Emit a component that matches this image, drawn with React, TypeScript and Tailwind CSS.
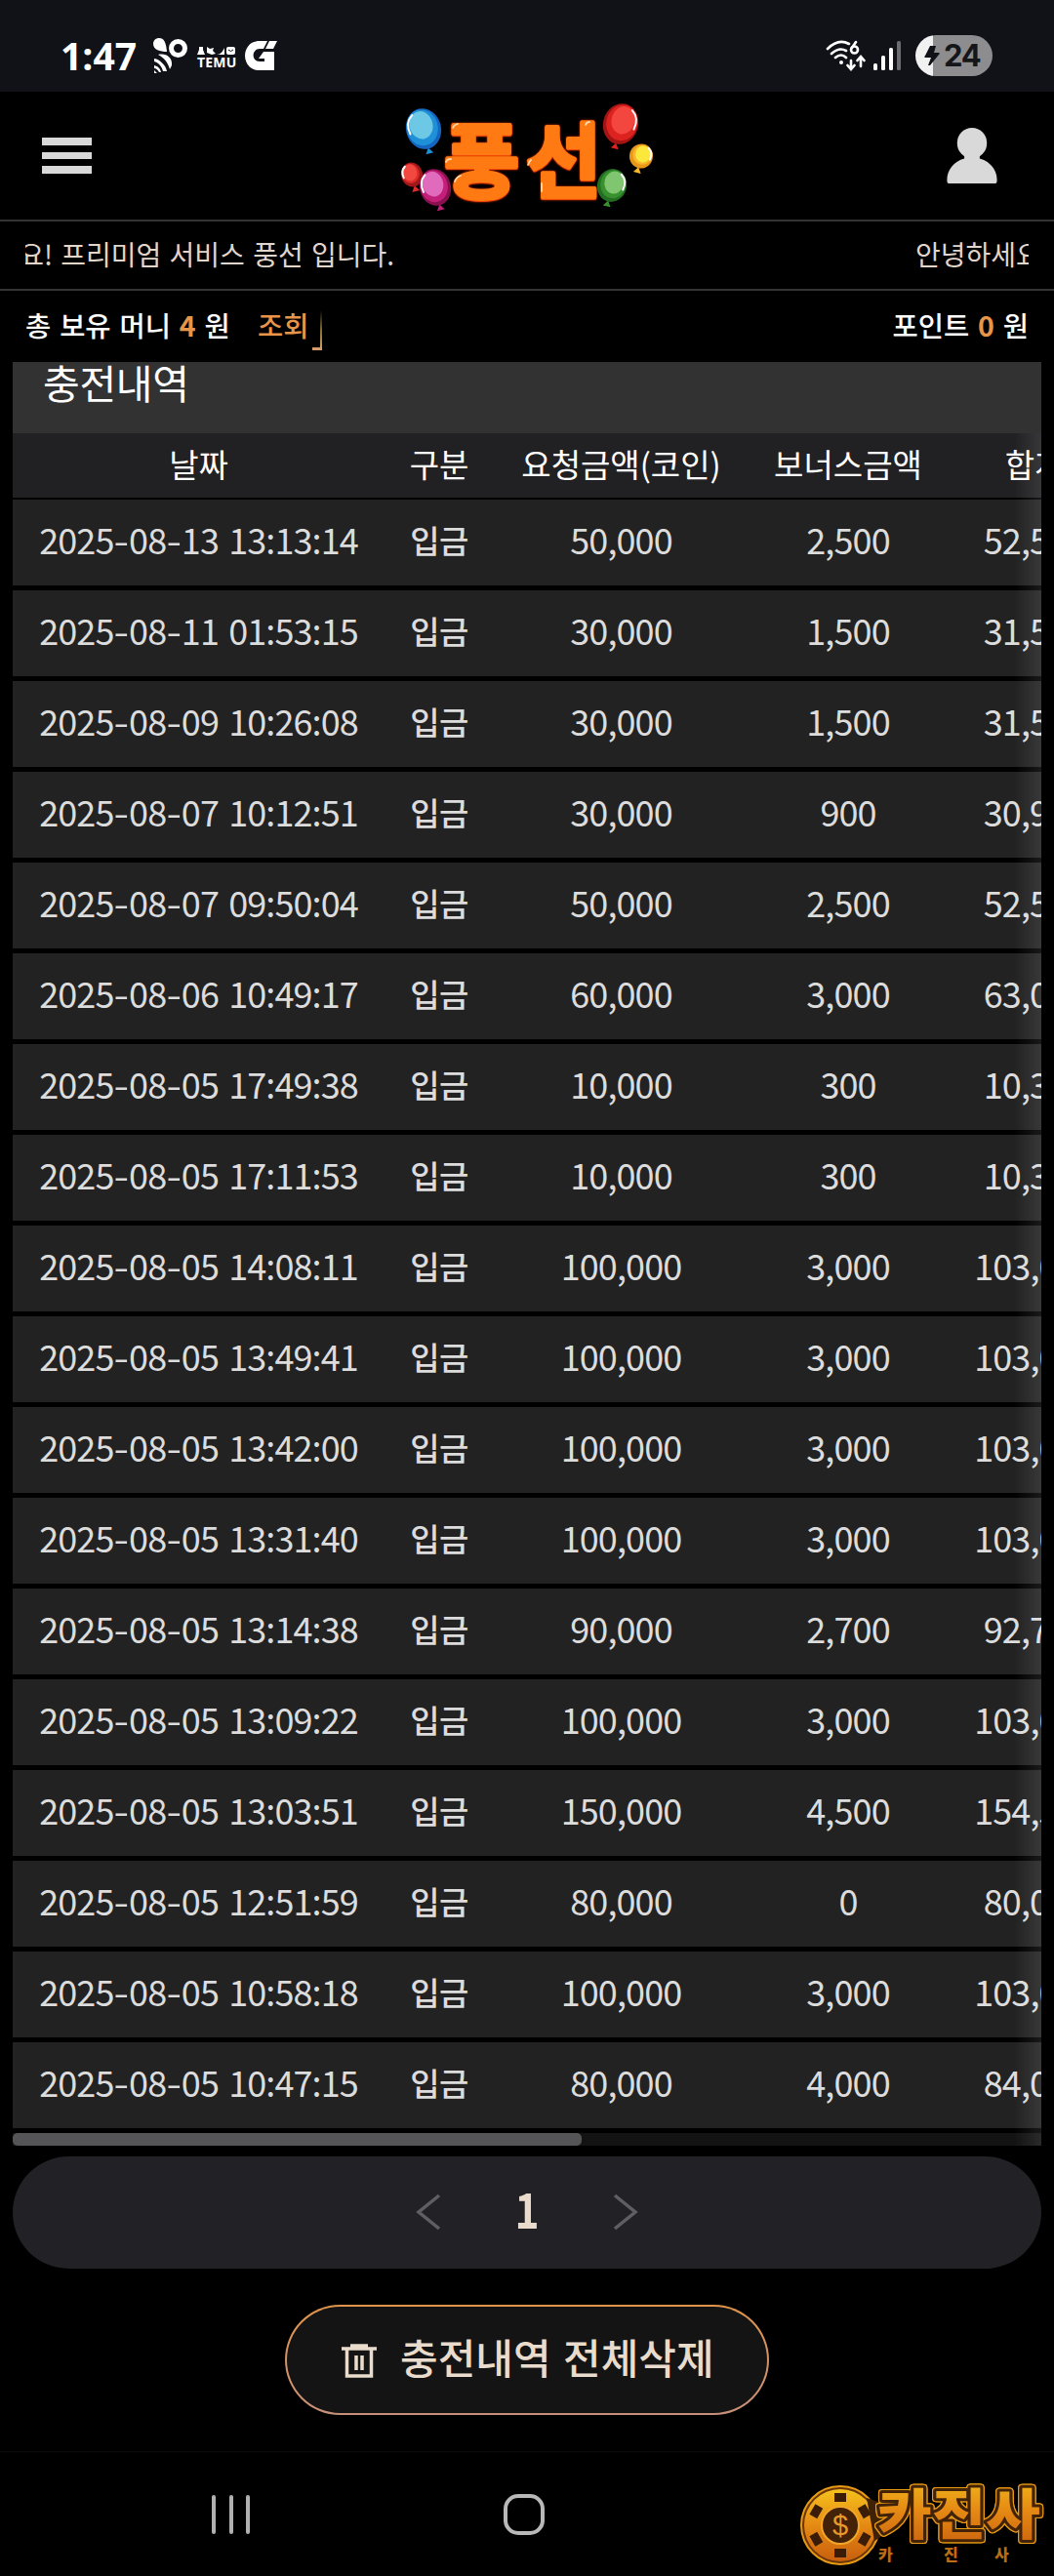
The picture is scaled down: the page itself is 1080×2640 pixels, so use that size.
import type { ReactNode } from "react";

const history = [
  ["2025-08-13 13:13:14", "50,000", "2,500", "52,500"],
  ["2025-08-11 01:53:15", "30,000", "1,500", "31,500"],
  ["2025-08-09 10:26:08", "30,000", "1,500", "31,500"],
  ["2025-08-07 10:12:51", "30,000", "900", "30,900"],
  ["2025-08-07 09:50:04", "50,000", "2,500", "52,500"],
  ["2025-08-06 10:49:17", "60,000", "3,000", "63,000"],
  ["2025-08-05 17:49:38", "10,000", "300", "10,300"],
  ["2025-08-05 17:11:53", "10,000", "300", "10,300"],
  ["2025-08-05 14:08:11", "100,000", "3,000", "103,000"],
  ["2025-08-05 13:49:41", "100,000", "3,000", "103,000"],
  ["2025-08-05 13:42:00", "100,000", "3,000", "103,000"],
  ["2025-08-05 13:31:40", "100,000", "3,000", "103,000"],
  ["2025-08-05 13:14:38", "90,000", "2,700", "92,700"],
  ["2025-08-05 13:09:22", "100,000", "3,000", "103,000"],
  ["2025-08-05 13:03:51", "150,000", "4,500", "154,500"],
  ["2025-08-05 12:51:59", "80,000", "0", "80,000"],
  ["2025-08-05 10:58:18", "100,000", "3,000", "103,000"],
  ["2025-08-05 10:47:15", "80,000", "4,000", "84,000"],
];

function StatusBar() {
  return (
    <div className="flex h-[94px] items-center bg-[#111218] pt-[20px] pr-[63px] pl-[62px]">
      <span className="w-[94px] font-['Open_Sans'] text-[39px] leading-[74px] font-bold text-white">1:47</span>
      <svg className="h-[38px] w-[36px]" viewBox="0 0 36 38">
        <path fill="#fff" d="M1 7C1 3 4 1 7 1c5 0 7 4 8 14C8 15 1 13 1 7Z" />
        <circle cx="26.500" cy="11.500" r="7" fill="none" stroke="#fff" strokeWidth="5" />
        <path fill="#fff" d="M6 18c8-2 15 3 14 11l-2 4C16 26 12 21 6 18zM2 22c6 1 12 7 13 13h-4C10 30 6 26 2 25zM2 29c4 1 6 3 7 7H7c-1-2-3-4-5-4zM2 34l3 3H2z" />
      </svg>
      <div className="ml-[10px] w-[42px] pt-[4px]">
        <svg className="h-[8px] w-[39px]" viewBox="0 0 39 8" fill="#fff">
          <path d="M2 0h4v3l2 5H0l2-5zM10 0l3 2 4-1-1 3 3 3-4 1-5-2zM20 8c4 0 6-3 8-7v7z" />
          <rect x="30" y="0" width="9" height="8" rx="2" />
          <path d="M32 3q2.500 3 5 0" stroke="#111218" fill="none" />
        </svg>
        <div className="font-['Open_Sans'] text-[14px] leading-[15px] font-bold tracking-[0.200px] text-white">TEMU</div>
      </div>
      <svg className="ml-[7px] h-[30px] w-[33px]" viewBox="0 0 33 30">
        <path fill="#fff" d="M15 0h8l-4 8h-4c-8 0-9 13 0 13h5v-3h-6l5-7h11v19H15C-5 30-5 0 15 0ZM25 0h8l-4 8h-8z" />
      </svg>
      <div className="ml-auto flex items-center">
        <svg className="h-[32px] w-[41px]" viewBox="0 0 41 32" fill="none" stroke="#fff" strokeWidth="2.600" strokeLinecap="round">
          <path d="M2 9Q13-2 24 4M6 14q8-7 15-3M10 18q6-5 11 0" />
          <circle cx="16" cy="23" r="2" fill="#fff" stroke="none" />
          <circle cx="29.500" cy="10" r="3.500" />
          <path d="M27 8l4-6M26 21v8M22.500 26l3.500 4 3.500-4M36 27v-9M32.500 21l3.500-4 3.500 4" />
        </svg>
        <svg className="ml-[8px] h-[30px] w-[29px]" viewBox="0 0 29 30">
          <rect x="0" y="23" width="4" height="7" rx="1.500" fill="#fff" />
          <rect x="8" y="15" width="4" height="15" rx="1.500" fill="#fff" />
          <rect x="16" y="7" width="4" height="23" rx="1.500" fill="#fff" />
          <rect x="24" y="0" width="4" height="30" rx="1.500" fill="#6b6c70" />
        </svg>
        <div className="ml-[14px] flex h-[42px] w-[79px] items-center overflow-hidden rounded-full bg-linear-to-r from-[#f1f1f2] from-[23%] to-[#8d8d90] to-[23%] pl-[9px]">
          <svg className="h-[22px] w-[16px]" viewBox="0 0 16 22">
            <path fill="#111218" d="M6 1h6L10 8h5c1 0 1 1 0 2L6 21H4l3-8H1c-1 0-1-1 0-2z" />
          </svg>
          <span className="ml-[4px] font-['Inter'] text-[31px] leading-[42px] font-bold tracking-[-1.200px] text-[#15161a]">24</span>
        </div>
      </div>
    </div>
  );
}

type BalloonProps = { x: number; y: number; rx: number; ry: number; dark: string; mid: string; light: string; tilt: number; shine: number };

function Balloon({ x, y, rx, ry, dark, mid, light, tilt, shine }: BalloonProps) {
  return (
    <g transform={`translate(${x} ${y}) rotate(${tilt})`}>
      <path d={`M0 ${ry - 1}l-4 6h8z`} fill={mid} />
      <ellipse rx={rx} ry={ry} fill={dark} />
      <ellipse cx={shine} cy={-1.5} rx={rx - 2} ry={ry - 2.5} fill={mid} />
      <ellipse cx={shine * 1.5} cy={-ry * 0.2} rx={rx * 0.66} ry={ry * 0.68} fill={light} />
      <path
        d={`M${shine * rx * 0.45} ${-ry * 0.78}Q${shine * rx * 0.95} ${-ry * 0.5} ${shine * rx * 0.8} ${ry * 0.1}`}
        fill="none"
        stroke="#fff"
        strokeWidth="2"
        strokeLinecap="round"
      />
    </g>
  );
}

function Logo() {
  return (
    <svg className="ml-[14px] h-[126px] w-[300px]" viewBox="0 6 300 126">
      <Balloon x={44} y={41} rx={18} ry={21} tilt={-14} shine={-1} dark="#1565c0" mid="#1e90d8" light="#6cc8e4" />
      <Balloon x={32} y={88} rx={11} ry={12.5} tilt={-14} shine={-1} dark="#a01818" mid="#dc2b2b" light="#f2483f" />
      <Balloon x={246} y={36} rx={18} ry={21} tilt={14} shine={1} dark="#a31414" mid="#dc231f" light="#f2463e" />
      <Balloon x={267} y={69} rx={12} ry={12.5} tilt={14} shine={1} dark="#e8971b" mid="#f8b82a" light="#fce83c" />
      <Balloon x={237} y={99} rx={15} ry={17} tilt={14} shine={1} dark="#236e20" mid="#37912e" light="#80c670" />
      <g
        className="font-['Noto_Sans_CJK_KR','Noto_Sans_CJK_SC',sans-serif] text-[84px] font-bold [filter:drop-shadow(0_1px_0_#f24a06)_drop-shadow(0_0_1px_#d92b00)]"
        fill="#ff7a12"
        stroke="#ff7a12"
        strokeWidth="4"
        strokeLinejoin="round"
      >
        <text x="65" y="105">풍</text>
        <text x="149" y="105">선</text>
      </g>
      <g fill="none" stroke="#ffd9a8" strokeWidth="1.800" strokeLinecap="round">
        <path d="M74 40q1-3 5-4M67 75q1-3 5-3M76 95q2-5 6-6M151 78q1-3 3-5M210 37q1-3 4-3M165 97v8" />
      </g>
      <Balloon x={56} y={101} rx={16} ry={19} tilt={-14} shine={-1} dark="#8a1050" mid="#c21f78" light="#e06abb" />
    </svg>
  );
}

function Header() {
  return (
    <header className="flex h-[133px] items-center justify-between border-b-2 border-[#333] pr-[57px] pl-[43px]">
      <div className="flex w-[53px] flex-col gap-[7px]">
        <div className="h-[7.700px] w-[51px] bg-[#d9d9d9]" />
        <div className="h-[7.700px] w-[51px] bg-[#d9d9d9]" />
        <div className="h-[7.700px] w-[51px] bg-[#d9d9d9]" />
      </div>
      <Logo />
      <svg className="h-[57px] w-[54px]" viewBox="0 0 54 58" fill="#d9d9d9">
        <ellipse cx="27" cy="16" rx="15.500" ry="16" />
        <path d="M19 28h16v4c11 3 18 12 18 22 0 3 0 4-2 4H3c-2 0-2-1-2-4 0-10 7-19 18-22z" />
      </svg>
    </header>
  );
}

function Cell({ children }: { children: ReactNode }) {
  return <div className="text-center whitespace-nowrap">{children}</div>;
}

function DateText({ value }: { value: string }) {
  const [year, month, rest] = value.split("-");
  return (
    <>
      {year}
      <span className="mx-[2px] inline-block scale-x-125">-</span>
      {month}
      <span className="mx-[2px] inline-block scale-x-125">-</span>
      {rest}
    </>
  );
}

function HistoryTable() {
  return (
    <section className="relative mx-[13px] h-[1828px] overflow-hidden">
      <h2 className="h-[73px] bg-[#323232] pl-[31px] text-[41px] leading-[40px] tracking-[-0.300px] text-white">충전내역</h2>
      <div className="mb-[2px] grid h-[66px] w-[1136px] grid-cols-[381px_112px_261px_204px_178px] bg-[#212124] text-[33px] leading-[63px] text-white">
        <Cell>날짜</Cell>
        <Cell>구분</Cell>
        <Cell>요청금액(코인)</Cell>
        <Cell>보너스금액</Cell>
        <Cell>합계</Cell>
      </div>
      {history.map(([date, amount, bonus, total]) => (
        <div
          key={date}
          className="mb-[5px] grid h-[88px] w-[1136px] grid-cols-[381px_112px_261px_204px_178px] bg-[#222] text-[36px] leading-[80px] tracking-[-0.900px] [word-spacing:3px] text-[#dcdcdc]"
        >
          <Cell>
            <DateText value={date} />
          </Cell>
          <div className="text-center text-[33px] leading-[82px] font-medium tracking-[-0.500px]">입금</div>
          <Cell>{amount}</Cell>
          <Cell>{bonus}</Cell>
          <Cell>{total}</Cell>
        </div>
      ))}
      <div className="h-[13px] bg-[#131313]">
        <div className="h-full w-[583px] rounded-[5px] bg-[#555558]" />
      </div>
      <div className="absolute top-[73px] right-0 bottom-0 w-[28px] bg-linear-to-r from-transparent to-white/10" />
    </section>
  );
}

function Watermark() {
  return (
    <svg className="absolute right-0 bottom-0 h-[120px] w-[280px]" viewBox="0 0 280 120">
      <defs>
        <linearGradient id="gold" x1="0" y1="0" x2="0" y2="1">
          <stop offset="0" stopColor="#f5c21c" />
          <stop offset="0.500" stopColor="#e58a14" />
          <stop offset="1" stopColor="#c85f0e" />
        </linearGradient>
      </defs>
      <circle cx="61" cy="68" r="40" fill="#6a3508" stroke="#e79a12" strokeWidth="2" />
      <circle cx="61" cy="68" r="37" fill="url(#gold)" />
      {/* six notches round the edge of the chip */}
      <g fill="#3a1c07">
        <rect x="55" y="35" width="12" height="9" />
        <rect x="55" y="35" width="12" height="9" transform="rotate(60 61 68)" />
        <rect x="55" y="35" width="12" height="9" transform="rotate(120 61 68)" />
        <rect x="55" y="35" width="12" height="9" transform="rotate(180 61 68)" />
        <rect x="55" y="35" width="12" height="9" transform="rotate(240 61 68)" />
        <rect x="55" y="35" width="12" height="9" transform="rotate(300 61 68)" />
      </g>
      <circle cx="61" cy="68" r="19" fill="#432208" stroke="#f1a628" strokeWidth="2" />
      <text x="61" y="78" textAnchor="middle" className="font-['Liberation_Sans'] text-[29px]" fill="#e8992a">$</text>
      <path d="M88 40l24 8v26L96 84z" fill="#3f2106" />
      <g
        className="font-['Noto_Sans_CJK_KR',sans-serif] text-[56px] font-black [filter:drop-shadow(1px_0_0_#e89a12)_drop-shadow(-1px_0_0_#e89a12)_drop-shadow(0_1px_0_#e89a12)_drop-shadow(0_-1px_0_#e89a12)] [paint-order:stroke]"
        fill="url(#gold)"
        stroke="#432307"
        strokeWidth="6"
        strokeLinejoin="round"
      >
        <text x="99" y="77" textLength="167" lengthAdjust="spacingAndGlyphs">카진사</text>
      </g>
      <g className="font-['Noto_Sans_CJK_KR',sans-serif] text-[16px] font-black" fill="#bd6b14">
        <text x="100" y="104">카</text>
        <text x="167" y="104">진</text>
        <text x="219" y="104">사</text>
      </g>
    </svg>
  );
}

export default function App() {
  return (
    <div className="flex h-[2640px] w-[1080px] flex-col overflow-hidden bg-black font-['Noto_Sans_CJK_KR','Noto_Sans_CJK_SC',sans-serif]">
      <StatusBar />
      <Header />
      <div className="flex h-[71px] justify-between border-b-2 border-[#333] px-[26px] text-[28px] leading-[66px] [word-spacing:2px] whitespace-nowrap text-[#e2d5ca]">
        <div className="flex w-[378px] justify-end overflow-hidden">요! 프리미엄 서비스 풍선 입니다.</div>
        <div className="w-[116px] overflow-hidden">안녕하세요</div>
      </div>
      <div className="flex h-[73px] justify-between px-[26px] text-[28.500px] leading-[69px] font-medium [word-spacing:2.500px] whitespace-nowrap text-white">
        <div className="flex">
          <p className="w-[238px]">
            총 보유 머니 <span className="font-bold text-[#e8954a]">4</span> 원
          </p>
          <div className="relative w-[66px] text-[#e8954a]">
            조회
            <div className="absolute top-[20px] right-0 h-[41px] w-[2px] bg-linear-to-b from-transparent via-[#85702f] to-[#e0a070]" />
            <div className="absolute top-[58px] right-0 h-[3px] w-[10px] bg-[#d49a6c]" />
          </div>
        </div>
        <p>
          포인트 <span className="font-bold text-[#e8954a]">0</span> 원
        </p>
      </div>
      <HistoryTable />
      <nav className="mx-[13px] mt-[11px] flex h-[115px] justify-center rounded-full bg-[#212126] text-[50px] leading-[105px] font-bold text-[#eadccd]">
        <svg className="mt-[38px] h-[38px] w-[26px]" viewBox="0 0 26 38" fill="none" stroke="#5f5f63" strokeWidth="3.500">
          <path d="M24 2L3 19l21 17" />
        </svg>
        <span className="w-[176px] scale-x-85 text-center">1</span>
        <svg className="mt-[38px] h-[38px] w-[26px]" viewBox="0 0 26 38" fill="none" stroke="#5f5f63" strokeWidth="3.500">
          <path d="M2 2l21 17L2 36" />
        </svg>
      </nav>
      <button className="mx-auto mt-[37px] flex h-[113px] w-[496px] shrink-0 rounded-full bg-linear-to-b from-[#e0944a] to-[#c8907a] p-[2px]">
        <span className="flex h-full w-full rounded-full bg-[#131413] pl-[56px] text-[42px] leading-[102px] font-medium [word-spacing:3px] whitespace-nowrap text-[#eadccd]">
          <svg className="mt-[37px] mr-[24px] h-[37px] w-[36px]" viewBox="0 0 36 37" fill="none" stroke="#eadccd" strokeWidth="3.500">
            <path d="M0 6h36M9 3h18M5.500 6v28h25V6M15 13v15M21 13v15" />
          </svg>
          충전내역 전체삭제
        </span>
      </button>
      <footer className="relative mt-[37px] flex-1 border-t border-[#0b0b0b]">
        <div className="flex items-center gap-[260px] pt-[43px] pl-[217px]">
          <div className="flex h-[40px] w-[39px] justify-between">
            <div className="w-[4px] rounded-full bg-[#b0b0b0]" />
            <div className="w-[4px] rounded-full bg-[#b0b0b0]" />
            <div className="w-[4px] rounded-full bg-[#b0b0b0]" />
          </div>
          <div className="h-[42px] w-[42px] rounded-[15px] border-4 border-[#b8b8b8]" />
        </div>
        <Watermark />
      </footer>
    </div>
  );
}
